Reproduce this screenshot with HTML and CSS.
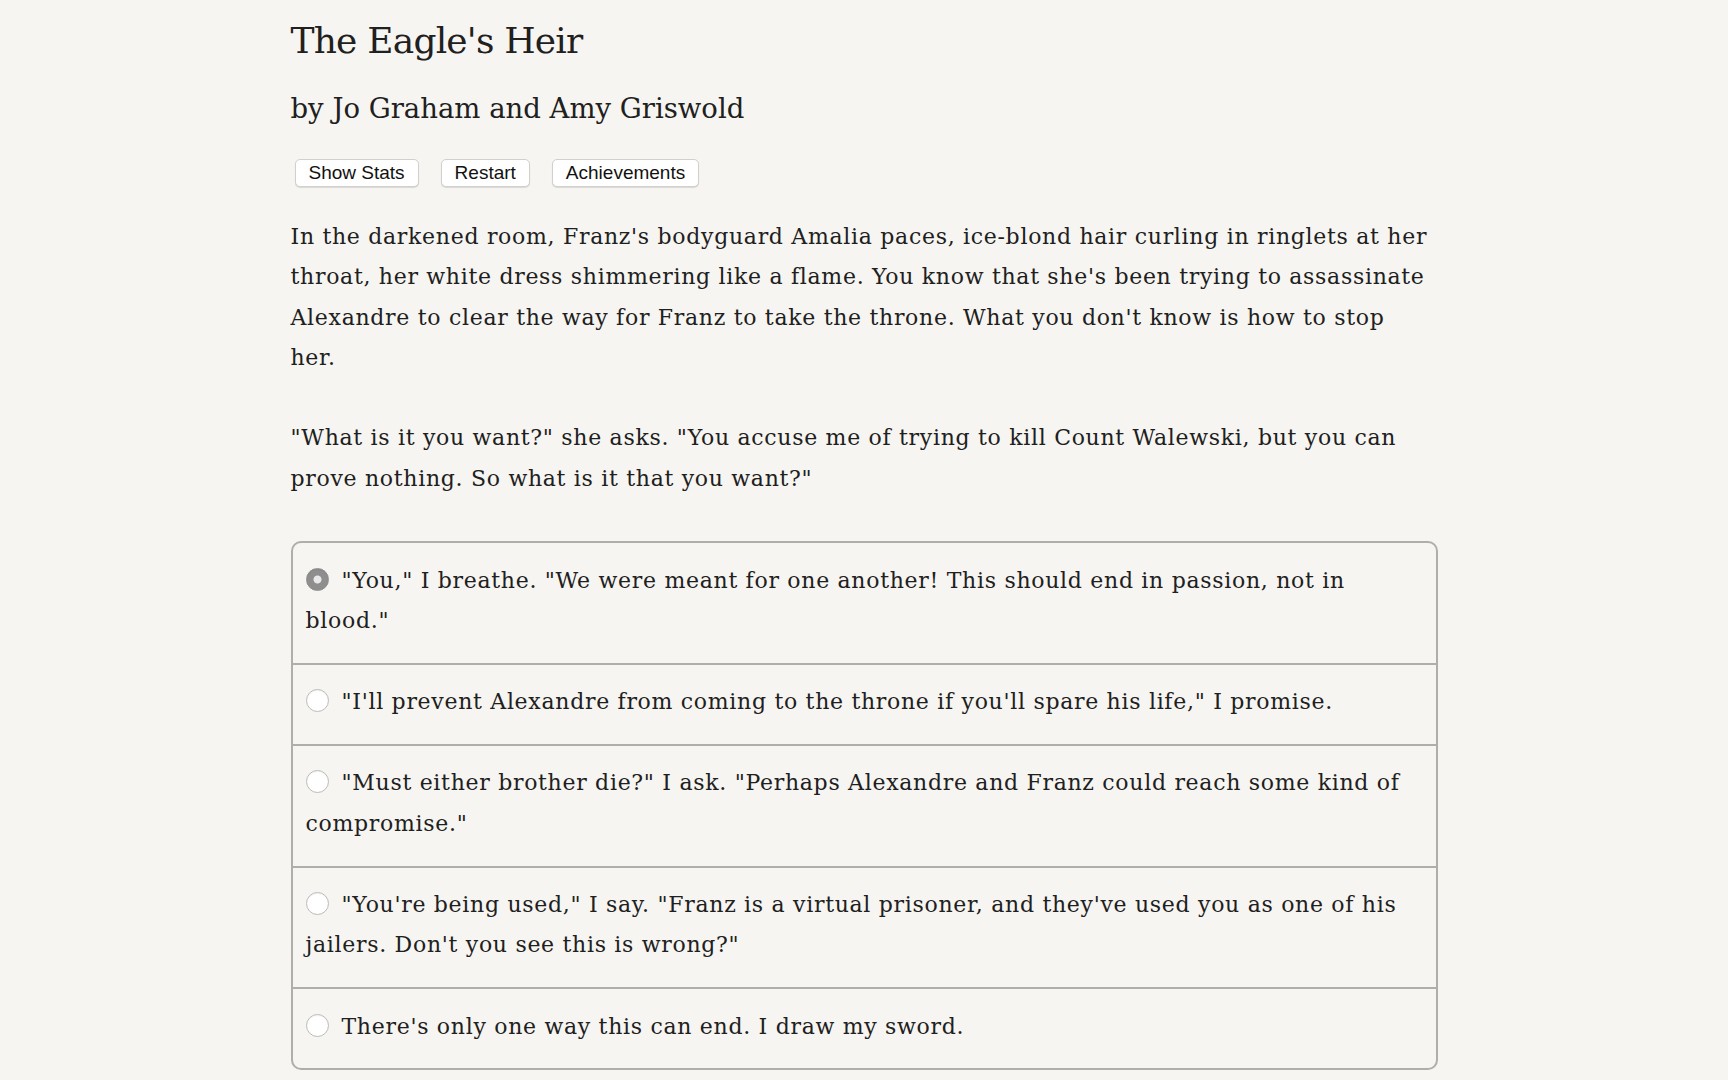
FILE: index.html
```html
<!DOCTYPE html>
<html lang="en">
<head>
<meta charset="utf-8">
<title>The Eagle's Heir</title>
<link rel="stylesheet" href="styles.css">
</head>
<body>
<div class="page">
  <h1 class="title">The Eagle's Heir</h1>
  <h2 class="byline">by Jo Graham and Amy Griswold</h2>
  <div class="toolbar">
    <button class="btn" type="button">Show Stats</button>
    <button class="btn" type="button">Restart</button>
    <button class="btn" type="button">Achievements</button>
  </div>
  <div class="story">
    <p>In the darkened room, Franz's bodyguard Amalia paces, ice-blond hair curling in ringlets at her throat, her white dress shimmering like a flame. You know that she's been trying to assassinate Alexandre to clear the way for Franz to take the throne. What you don't know is how to stop her.</p>
    <p>"What is it you want?" she asks. "You accuse me of trying to kill Count Walewski, but you can prove nothing. So what is it that you want?"</p>
  </div>
  <form class="choices">
    <label class="choice"><input class="radio" type="radio" name="choice" checked>"You," I breathe. "We were meant for one another! This should end in passion, not in blood."</label>
    <label class="choice"><input class="radio" type="radio" name="choice">"I'll prevent Alexandre from coming to the throne if you'll spare his life," I promise.</label>
    <label class="choice"><input class="radio" type="radio" name="choice">"Must either brother die?" I ask. "Perhaps Alexandre and Franz could reach some kind of compromise."</label>
    <label class="choice"><input class="radio" type="radio" name="choice">"You're being used," I say. "Franz is a virtual prisoner, and they've used you as one of his jailers. Don't you see this is wrong?"</label>
    <label class="choice"><input class="radio" type="radio" name="choice">There's only one way this can end. I draw my sword.</label>
  </form>
</div>
</body>
</html>
```

FILE: styles.css
```css
html, body {
  background: #f7f5f1;
}

body {
  margin: 0;
  color: #202020;
  font-family: "DejaVu Serif", "Liberation Serif", serif;
}

.page {
  width: 1147px;
  margin: 0 auto;
  padding-top: 18px;
}

.title {
  margin: 0;
  font-size: 36px;
  line-height: 45px;
  font-weight: normal;
  letter-spacing: -0.8px;
}

.byline {
  margin: 28px 0 0;
  font-size: 27.5px;
  line-height: 34px;
  font-weight: normal;
}

.toolbar {
  display: flex;
  gap: 22px;
  margin: 34px 0 0 4px;
}

.btn {
  font-family: "Liberation Sans", Arial, sans-serif;
  font-size: 19px;
  line-height: 26px;
  padding: 0 13px;
  color: #111111;
  background: #ffffff;
  border: 1px solid #d2d0cc;
  border-radius: 5px;
  box-shadow: 0 1px 1px rgba(0, 0, 0, 0.12);
}

.story {
  margin-top: 30px;
  padding-right: 6px;
  font-size: 22px;
  line-height: 40.3px;
  letter-spacing: 0.7px;
}

.story p {
  margin: 0 0 40.3px;
}

.story p:last-child {
  margin-bottom: 0;
}

.choices {
  margin: 42px 0 0;
  border: 2px solid #b0aeaa;
  border-radius: 10px;
  font-size: 22px;
  line-height: 40.3px;
  letter-spacing: 0.7px;
}

.choice {
  display: block;
  padding: 17.5px 13px 21.5px;
  border-top: 2px solid #b0aeaa;
}

.choice:first-child {
  border-top: none;
}

.radio {
  -webkit-appearance: none;
  appearance: none;
  box-sizing: border-box;
  width: 23px;
  height: 23px;
  margin: 0 13px 0 0;
  border: 1px solid #bdbbb8;
  border-radius: 50%;
  background: #ffffff;
  vertical-align: -3px;
  box-shadow: inset 0 1px 1px rgba(0, 0, 0, 0.05);
}

.radio:checked {
  border-color: #8c8c8c;
  background: radial-gradient(circle, #e8e8e8 0 3.5px, #8e8e8e 4.5px);
}
```
